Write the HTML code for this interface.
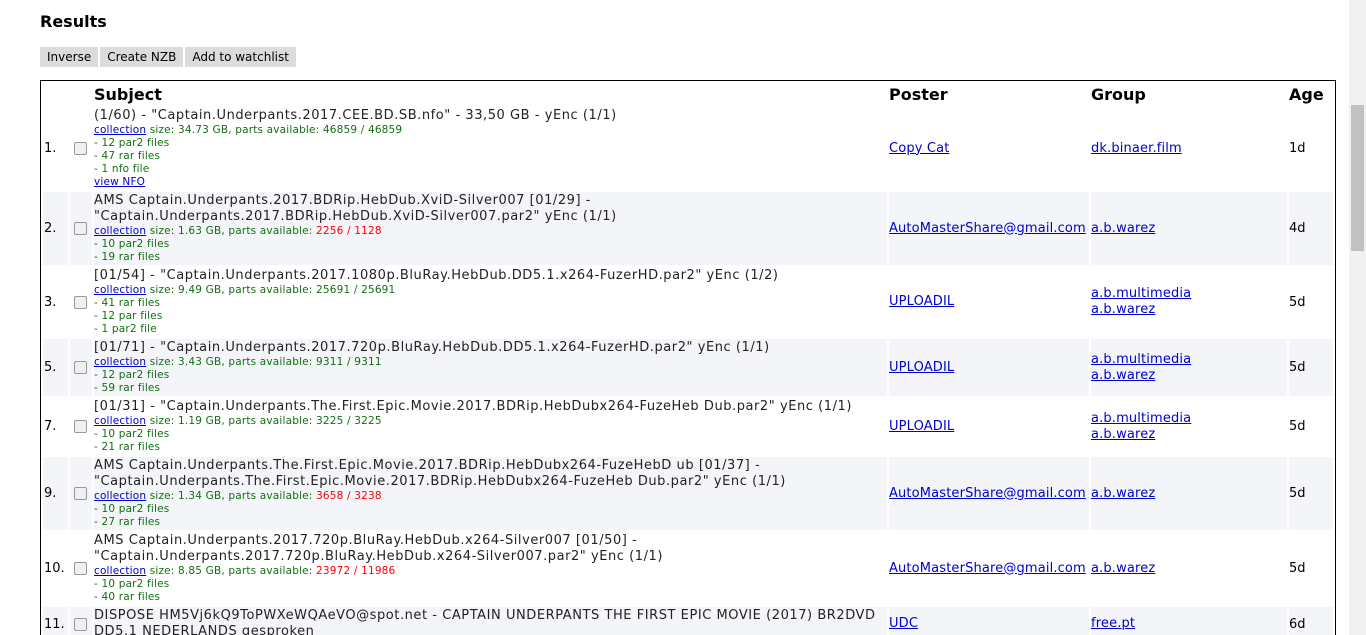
<!DOCTYPE html>
<html style="overflow:hidden"><head><meta charset="utf-8"><style>
body{margin:0;background:#fff;font-family:"DejaVu Sans","Liberation Sans",sans-serif;color:#000;width:1366px;height:635px;overflow:hidden;position:relative}
h2{position:absolute;left:40px;top:12px;margin:0;font-size:16px;font-weight:bold}
.btns{position:absolute;left:40px;top:46px}
.btns span{display:inline-block;background:#dcdcdc;font-size:12px;padding:0 7px;height:20px;line-height:20px;margin-right:2px}
table{position:absolute;left:40px;top:80px;width:1296px;border:1px solid #000;border-spacing:2px;border-collapse:separate;box-sizing:border-box;table-layout:fixed}
th{font-size:16px;text-align:left;height:22px;line-height:20px;padding:0;vertical-align:bottom}
td{padding:1px 0;vertical-align:middle;font-size:13px}
tr.e td{background:#f4f5f9}
.s{line-height:16px;font-size:13px;color:#222;letter-spacing:0.55px;white-space:nowrap}
.m{font-size:10.5px;line-height:13px;color:#107010;letter-spacing:0.18px}
.r{color:#f00}
a{color:#00c;text-decoration:underline}
td.n{font-size:13px;padding-left:1px}
.cb{display:inline-block;width:11px;height:11px;border:1px solid #999;border-radius:2px;background:#f0f0f0;vertical-align:middle;margin-left:4px}
td.p,td.g{line-height:16px;letter-spacing:0.15px}
.sb{position:absolute;right:0;top:0;width:17px;height:635px;background:#f1f1f1}
.sb div{position:absolute;left:2px;top:105px;width:13px;height:146px;background:#c1c1c1}
</style></head><body>
<h2>Results</h2>
<div class="btns"><span>Inverse</span><span>Create NZB</span><span>Add to watchlist</span></div>
<table>
<colgroup><col style="width:25px"><col style="width:22px"><col style="width:793px"><col style="width:200px"><col style="width:196px"><col style="width:44px"></colgroup>
<tr><th></th><th></th><th>Subject</th><th>Poster</th><th>Group</th><th>Age</th></tr>
<tr><td class="n">1.</td><td class="c"><span class="cb"></span></td><td><div class="s">(1/60) - "Captain.Underpants.2017.CEE.BD.SB.nfo" - 33,50 GB - yEnc (1/1)</div><div class="m"><a>collection</a> size: 34.73 GB, parts available: 46859 / 46859<br>- 12 par2 files<br>- 47 rar files<br>- 1 nfo file<br><a>view NFO</a></div></td><td class="p"><a>Copy Cat</a></td><td class="g"><a>dk.binaer.film</a></td><td>1d</td></tr>
<tr class="e"><td class="n">2.</td><td class="c"><span class="cb"></span></td><td><div class="s">AMS Captain.Underpants.2017.BDRip.HebDub.XviD-Silver007 [01/29] -<br>"Captain.Underpants.2017.BDRip.HebDub.XviD-Silver007.par2" yEnc (1/1)</div><div class="m"><a>collection</a> size: 1.63 GB, parts available: <span class="r">2256 / 1128</span><br>- 10 par2 files<br>- 19 rar files</div></td><td class="p"><a>AutoMasterShare@gmail.com</a></td><td class="g"><a>a.b.warez</a></td><td>4d</td></tr>
<tr><td class="n">3.</td><td class="c"><span class="cb"></span></td><td><div class="s">[01/54] - "Captain.Underpants.2017.1080p.BluRay.HebDub.DD5.1.x264-FuzerHD.par2" yEnc (1/2)</div><div class="m"><a>collection</a> size: 9.49 GB, parts available: 25691 / 25691<br>- 41 rar files<br>- 12 par files<br>- 1 par2 file</div></td><td class="p"><a>UPLOADIL</a></td><td class="g"><a>a.b.multimedia</a><br><a>a.b.warez</a></td><td>5d</td></tr>
<tr class="e"><td class="n">5.</td><td class="c"><span class="cb"></span></td><td><div class="s">[01/71] - "Captain.Underpants.2017.720p.BluRay.HebDub.DD5.1.x264-FuzerHD.par2" yEnc (1/1)</div><div class="m"><a>collection</a> size: 3.43 GB, parts available: 9311 / 9311<br>- 12 par2 files<br>- 59 rar files</div></td><td class="p"><a>UPLOADIL</a></td><td class="g"><a>a.b.multimedia</a><br><a>a.b.warez</a></td><td>5d</td></tr>
<tr><td class="n">7.</td><td class="c"><span class="cb"></span></td><td><div class="s">[01/31] - "Captain.Underpants.The.First.Epic.Movie.2017.BDRip.HebDubx264-FuzeHeb Dub.par2" yEnc (1/1)</div><div class="m"><a>collection</a> size: 1.19 GB, parts available: 3225 / 3225<br>- 10 par2 files<br>- 21 rar files</div></td><td class="p"><a>UPLOADIL</a></td><td class="g"><a>a.b.multimedia</a><br><a>a.b.warez</a></td><td>5d</td></tr>
<tr class="e"><td class="n">9.</td><td class="c"><span class="cb"></span></td><td><div class="s">AMS Captain.Underpants.The.First.Epic.Movie.2017.BDRip.HebDubx264-FuzeHebD ub [01/37] -<br>"Captain.Underpants.The.First.Epic.Movie.2017.BDRip.HebDubx264-FuzeHeb Dub.par2" yEnc (1/1)</div><div class="m"><a>collection</a> size: 1.34 GB, parts available: <span class="r">3658 / 3238</span><br>- 10 par2 files<br>- 27 rar files</div></td><td class="p"><a>AutoMasterShare@gmail.com</a></td><td class="g"><a>a.b.warez</a></td><td>5d</td></tr>
<tr><td class="n">10.</td><td class="c"><span class="cb"></span></td><td><div class="s">AMS Captain.Underpants.2017.720p.BluRay.HebDub.x264-Silver007 [01/50] -<br>"Captain.Underpants.2017.720p.BluRay.HebDub.x264-Silver007.par2" yEnc (1/1)</div><div class="m"><a>collection</a> size: 8.85 GB, parts available: <span class="r">23972 / 11986</span><br>- 10 par2 files<br>- 40 rar files</div></td><td class="p"><a>AutoMasterShare@gmail.com</a></td><td class="g"><a>a.b.warez</a></td><td>5d</td></tr>
<tr class="e"><td class="n">11.</td><td class="c"><span class="cb"></span></td><td><div class="s">DISPOSE HM5Vj6kQ9ToPWXeWQAeVO@spot.net - CAPTAIN UNDERPANTS THE FIRST EPIC MOVIE (2017) BR2DVD<br>DD5.1 NEDERLANDS gesproken</div></td><td class="p"><a>UDC</a></td><td class="g"><a>free.pt</a></td><td>6d</td></tr>
</table>
<div class="sb"><div></div></div>
</body></html>
